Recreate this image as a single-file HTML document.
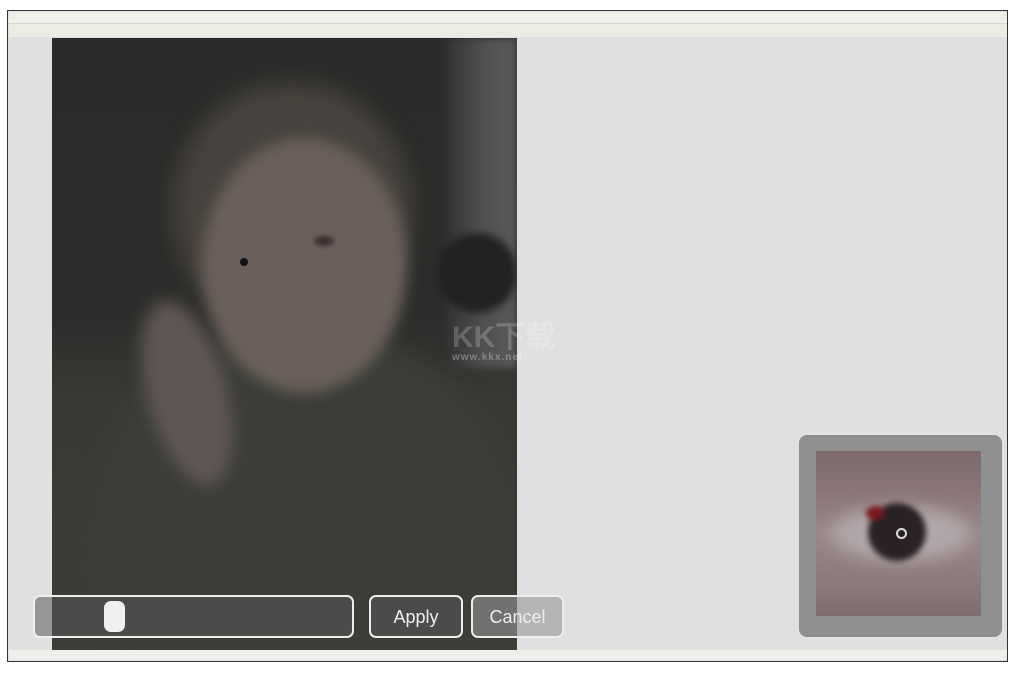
<!DOCTYPE html>
<html><head><meta charset="utf-8"><style>
html,body{margin:0;width:1011px;height:673px;overflow:hidden}
body{background:#fff;position:relative;font-family:"Liberation Sans",sans-serif}
.a{position:absolute}
.photo{left:52px;top:38px;width:465px;height:612px;background:linear-gradient(#2b2c2a 0,#2c2d2b 45%,#383a34 60%,#3b3d37 100%);overflow:hidden}
.b{position:absolute;border-radius:50%}
.btn{position:absolute;border:2px solid #eee;border-radius:7px;background:rgba(90,90,90,.55);color:#eee;font-size:18px;text-align:center;line-height:40px;box-sizing:border-box}
</style></head><body>
<div class="a" style="left:7px;top:10px;width:1001px;height:652px;border:1.5px solid #333;box-sizing:border-box;background:#e0e0e0"></div>
<div class="a" style="left:9px;top:12px;width:998px;height:11px;background:#efeee8;border-bottom:1px solid #d8d8d0"></div>
<div class="a" style="left:9px;top:24px;width:998px;height:13px;background:#ecebe4"></div>
<div class="a" style="left:9px;top:650px;width:998px;height:10px;background:#eeeeea"></div>
<div class="a photo">
 <div class="a" style="left:395px;top:0;width:70px;height:330px;background:linear-gradient(90deg,#333,#505050 50%,#5a5a5a);filter:blur(4px)"></div>
 <div class="b" style="left:385px;top:195px;width:80px;height:80px;background:#222;filter:blur(4px)"></div>
 <div class="b" style="left:120px;top:45px;width:240px;height:250px;background:#46423d;filter:blur(10px)"></div>
 <div class="b" style="left:30px;top:290px;width:440px;height:420px;background:#3b3d37;filter:blur(10px)"></div>
 <div class="b" style="left:150px;top:100px;width:205px;height:255px;background:#6a5f5b;filter:blur(7px)"></div>
 <div class="b" style="left:95px;top:260px;width:80px;height:190px;background:#5f5653;filter:blur(8px);transform:rotate(-15deg)"></div>
 <div class="b" style="left:188px;top:220px;width:8px;height:8px;background:#111"></div>
 <div class="b" style="left:262px;top:198px;width:20px;height:10px;background:#3a3230;filter:blur(2px)"></div>
</div>
<div class="a" style="left:452px;top:312px;font-size:30px;font-weight:bold;color:rgba(255,255,255,.2)">KK下载</div>
<div class="a" style="left:452px;top:352px;font-size:10px;font-weight:bold;color:rgba(255,255,255,.3);letter-spacing:1px">www.kkx.net</div>
<div class="btn" style="left:33px;top:595px;width:321px;height:43px"></div>
<div class="a" style="left:104px;top:601px;width:21px;height:31px;background:#f0f0f0;border-radius:7px"></div>
<div class="btn" style="left:369px;top:595px;width:94px;height:43px">Apply</div>
<div class="btn" style="left:471px;top:595px;width:93px;height:43px;background:rgba(150,150,150,.6)">Cancel</div>
<div class="a" style="left:799px;top:435px;width:203px;height:202px;background:#8f8f8f;border-radius:8px"></div>
<div class="a" style="left:816px;top:451px;width:165px;height:165px;background:linear-gradient(#7c6a6c,#8a7677 25%,#9a8889 50%,#8c7a7c 80%,#7e6c6e);overflow:hidden">
 <div class="b" style="left:15px;top:55px;width:140px;height:55px;background:#b0a6a8;filter:blur(8px)"></div>
 <div class="b" style="left:52px;top:52px;width:58px;height:58px;background:#2a2224;filter:blur(3px)"></div>
 <div class="b" style="left:50px;top:55px;width:18px;height:14px;background:#7a1818;filter:blur(3px)"></div>
 <div class="b" style="left:80px;top:77px;width:7px;height:7px;border:2px solid #ddd"></div>
</div>
</body></html>
